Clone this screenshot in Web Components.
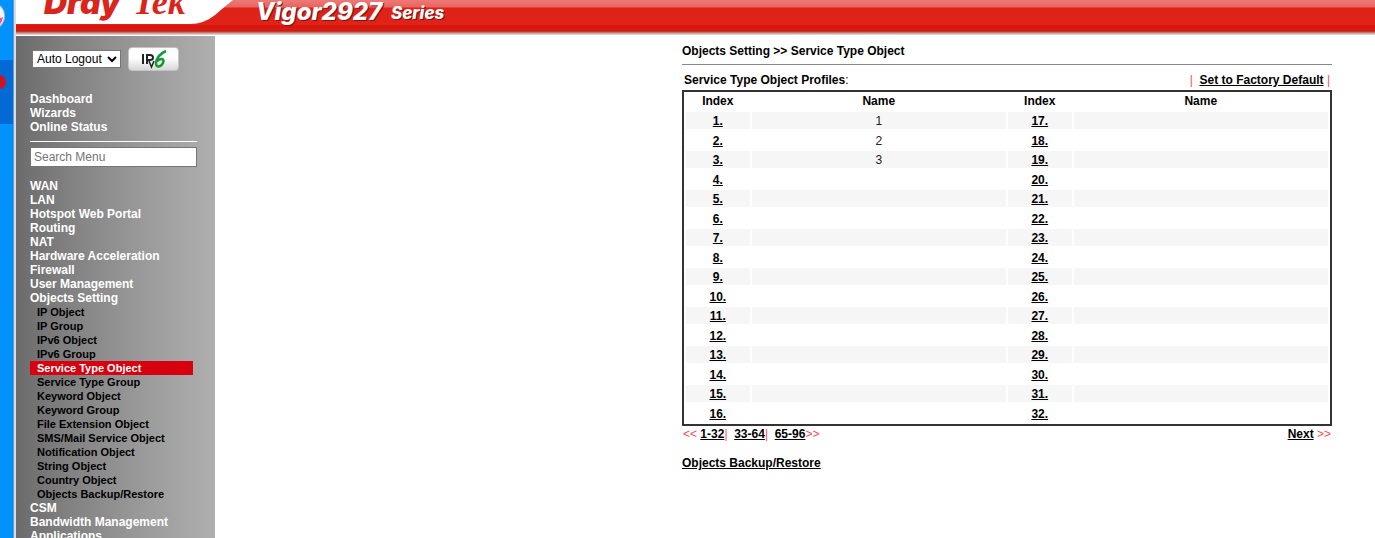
<!DOCTYPE html>
<html lang="en">
<head>
<meta charset="utf-8">
<title>Vigor2927 Series</title>
<style>
    html, body{
        height: 100%;
    }
    body{
        margin: 0;
        overflow: hidden;
        background-color: #fff;
        font-family: "Liberation Sans", Arial, sans-serif;
        font-size: 12px;
        color: #000;
    }
</style>
</head>
<body>
<router-page>
    <desktop-edge slot="edge"></desktop-edge>
    <brand-header slot="header" model="Vigor2927"></brand-header>
    <side-menu slot="menu"></side-menu>
    <profile-page>
        <span slot="path">Objects Setting &gt;&gt; Service Type Object</span>
        <profile-table></profile-table>
    </profile-page>
</router-page>

<script>
const topMenu = ['Dashboard', 'Wizards', 'Online Status']

const mainMenu = [
    { name: 'WAN' },
    { name: 'LAN' },
    { name: 'Hotspot Web Portal' },
    { name: 'Routing' },
    { name: 'NAT' },
    { name: 'Hardware Acceleration' },
    { name: 'Firewall' },
    { name: 'User Management' },
    {
        name: 'Objects Setting',
        items: ['IP Object', 'IP Group', 'IPv6 Object', 'IPv6 Group', 'Service Type Object',
            'Service Type Group', 'Keyword Object', 'Keyword Group', 'File Extension Object',
            'SMS/Mail Service Object', 'Notification Object', 'String Object',
            'Country Object', 'Objects Backup/Restore']
    },
    { name: 'CSM' },
    { name: 'Bandwidth Management' },
    { name: 'Applications' }
]

const profiles = { 1: '1', 2: '2', 3: '3' }

class RouterPage extends HTMLElement {
    constructor() {
        super()
        this._shadowDom = this.attachShadow({ mode: 'open' })
    }

    connectedCallback() {
        this._shadowDom.innerHTML = `
            <style>
                :host{
                    display: flex;
                    height: 100%;
                }
                .window{
                    flex: 1;
                    display: flex;
                    flex-direction: column;
                    border-left: 2px solid #dcdcdc;
                }
                .body{
                    flex: 1;
                    display: flex;
                    min-height: 0;
                    padding-top: 1px;
                }
            </style>
            <slot name="edge"></slot>
            <div class="window">
                <slot name="header"></slot>
                <div class="body">
                    <slot name="menu"></slot>
                    <slot></slot>
                </div>
            </div>
        `
    }
}

// strip of the desktop left of the browser window
class DesktopEdge extends HTMLElement {
    constructor() {
        super()
        this._shadowDom = this.attachShadow({ mode: 'open' })
    }

    connectedCallback() {
        this._shadowDom.innerHTML = `
            <style>
                :host{
                    display: block;
                    flex: none;
                    width: 14px;
                    background: linear-gradient(90deg, #0292fd 12px, #0a7be0 13px, #b9c4cf 14px);
                }
                svg{
                    display: block;
                }
            </style>
            <svg width="14" height="130" viewBox="0 0 14 130" aria-hidden="true">
                <circle cx="-9" cy="16" r="14" fill="#b4bcc6"/>
                <circle cx="-9" cy="16" r="13" fill="#f4f4f6"/>
                <path d="M-4 20L3 17Q2 24-4 28Z" fill="#f0508f"/>
                <rect y="60" width="13" height="64" fill="#0369d4"/>
                <circle cx="-1" cy="82" r="7" fill="#d8101c"/>
                <path d="M-1 79L3 82L-1 85" fill="none" stroke="#8a2a5a"/>
            </svg>
        `
    }
}

class BrandHeader extends HTMLElement {
    constructor() {
        super()
        this._shadowDom = this.attachShadow({ mode: 'open' })
    }

    connectedCallback() {
        this._shadowDom.innerHTML = `
            <style>
                :host{
                    display: block;
                    flex: none;
                    height: 35px;
                    overflow: hidden;
                    background: linear-gradient(#ec7a76 0, #ea6460 7px, #dd2218 8px, #df2318 25px, #d90f04 26px, #db1d12 29px, #c01c12 31px, #d58d88 33px, #bfc4c4 34px, #e4e6e6 35px);
                }
                svg{
                    display: block;
                }
                .dray{
                    font: italic 900 32px Inter, sans-serif;
                }
                .tek{
                    font: italic bold 36px "Liberation Serif", serif;
                }
                .model{
                    font: italic 800 24px Inter, sans-serif;
                }
                .series{
                    font: italic 800 17px Inter, sans-serif;
                }
            </style>
            <svg width="460" height="35" role="img" aria-label="DrayTek ${this.getAttribute('model')} Series">
                <path d="M0 0H217Q207 8 199 15Q188 24 174 24H0Z" fill="#fff"/>
                <g fill="#d9251c">
                    <text class="dray" x="28" y="14">Dray</text>
                    <text class="tek" x="117" y="14">Tek</text>
                </g>
                <g fill="#7d1710">
                    <text class="model" x="241" y="21">${this.getAttribute('model')}</text>
                    <text class="series" x="376" y="20">Series</text>
                </g>
                <g fill="#fff">
                    <text class="model" x="240" y="20">${this.getAttribute('model')}</text>
                    <text class="series" x="375" y="19">Series</text>
                </g>
            </svg>
        `
    }
}

class SideMenu extends HTMLElement {
    constructor() {
        super()
        this._shadowDom = this.attachShadow({ mode: 'open' })
    }

    connectedCallback() {
        this._shadowDom.innerHTML = `
            <style>
                :host{
                    display: block;
                    flex: none;
                    width: 199px;
                    box-sizing: border-box;
                    padding: 11px 18px 0 14px;
                    overflow: hidden;
                    background: linear-gradient(90deg, #6b6b6b, #808080 25%, #999 62%, #afafaf);
                    font-weight: bold;
                    font-size: 12px;
                    line-height: 14px;
                }
                .tools{
                    display: flex;
                    align-items: center;
                    gap: 7px;
                    padding-left: 2px;
                    margin-bottom: 21px;
                }
                select{
                    width: 89px;
                    height: 18px;
                    padding: 0;
                    border: 1px solid #767676;
                    background-color: #fff;
                    font: 12px "Liberation Sans", Arial, sans-serif;
                    color: #000;
                }
                button{
                    width: 51px;
                    height: 24px;
                    padding: 0;
                    border: 1px solid #c4c4c4;
                    border-radius: 4px;
                    background: linear-gradient(#fff 45%, #d8d8d8);
                }
                button svg{
                    display: block;
                    margin: auto;
                }
                a{
                    display: block;
                    color: #fff;
                    text-decoration: none;
                }
                ul{
                    margin: 0;
                    padding: 0;
                    list-style: none;
                }
                ul ul a{
                    margin-right: 4px;
                    padding-left: 7px;
                    font-size: 11px;
                    color: #000;
                }
                ul ul a.active{
                    background-color: #d7000f;
                    color: #fff;
                }
                hr{
                    margin: 7px 0 5px;
                    border: 0;
                    border-top: 1px solid #fff;
                }
                input{
                    display: block;
                    box-sizing: border-box;
                    width: 100%;
                    height: 20px;
                    margin-bottom: 12px;
                    padding: 0 3px;
                    border: 1px solid #767676;
                    font: 12px "Liberation Sans", Arial, sans-serif;
                }
            </style>
            <div class="tools">
                <select aria-label="Auto Logout"><option>Auto Logout</option></select>
                <button type="button" aria-label="IPv6">
                    <svg width="28" height="20" viewBox="0 0 28 20">
                        <path d="M3 5V15M7 15V6H10Q13 6 13 8.500T10 11H7" fill="none" stroke="#222" stroke-width="2"/>
                        <path d="M9 12L11.500 18L14 12" fill="none" stroke="#222" stroke-width="1.500"/>
                        <path d="M26 2Q17 6 16 14Q16 18 19 17.500Q23 16 23.500 12Q23 8 17 12" fill="none" stroke="#129a38" stroke-width="2.500"/>
                    </svg>
                </button>
            </div>
            <ul>${topMenu.map(name => `<li><a href="#">${name}</a></li>`).join('')}</ul>
            <hr>
            <input type="text" placeholder="Search Menu" aria-label="Search Menu">
            <ul>${mainMenu.map(menu => this.renderMenu(menu)).join('')}</ul>
        `
    }

    renderMenu(menu) {
        const items = (menu.items || []).map(item =>
            `<li><a href="#" class="${item === 'Service Type Object' ? 'active' : ''}">${item}</a></li>`
        ).join('')
        return `<li><a href="#">${menu.name}</a>${items ? `<ul>${items}</ul>` : ''}</li>`
    }
}

class ProfilePage extends HTMLElement {
    constructor() {
        super()
        this._shadowDom = this.attachShadow({ mode: 'open' })
    }

    connectedCallback() {
        this._shadowDom.innerHTML = `
            <style>
                :host{
                    display: block;
                    flex: 0 1 650px;
                    margin: 8px 43px 0 auto;
                    line-height: 14px;
                }
                h1{
                    margin: 0 0 6px;
                    font-size: 12px;
                }
                hr{
                    margin: 0 0 8px;
                    border: 0;
                    border-top: 1px solid #888;
                }
                a{
                    color: #000;
                    font-weight: bold;
                }
                .backup{
                    display: inline-block;
                    margin-top: 15px;
                }
            </style>
            <h1><slot name="path"></slot></h1>
            <hr>
            <slot></slot>
            <a class="backup" href="#">Objects Backup/Restore</a>
        `
    }
}

class ProfileTable extends HTMLElement {
    constructor() {
        super()
        this._shadowDom = this.attachShadow({ mode: 'open' })
    }

    connectedCallback() {
        let rows = ''
        for (let i = 1; i <= 16; i++) {
            rows += `<tr>${this.renderCells(i)}${this.renderCells(i + 16)}</tr>`
        }

        this._shadowDom.innerHTML = `
            <style>
                :host{
                    display: block;
                }
                .bar{
                    display: flex;
                    justify-content: space-between;
                    color: #ff4a50;
                    white-space: pre;
                }
                .title{
                    padding-left: 2px;
                    color: #000;
                }
                .caption{
                    margin-bottom: 3px;
                    padding-right: 2px;
                }
                a{
                    color: #000;
                    font-weight: bold;
                }
                table{
                    width: 100%;
                    table-layout: fixed;
                    border: 2px solid #333;
                    border-spacing: 2px;
                }
                th, td{
                    padding: 0;
                    text-align: center;
                }
                th{
                    padding-bottom: 2px;
                    line-height: 14px;
                }
                th:nth-child(odd){
                    width: 10%;
                }
                th:nth-child(even){
                    width: 40%;
                }
                td{
                    padding-top: 2px;
                    line-height: 15px;
                    color: #222;
                }
                tbody tr:nth-child(odd) td{
                    background-color: #f6f6f6;
                }
                tbody tr:nth-child(even) td{
                    line-height: 16px;
                }
                .pages{
                    padding: 1px 1px 0;
                }
            </style>
            <div class="bar caption">
                <span class="title"><b>Service Type Object Profiles</b>:</span>
                <span>|  <a href="#">Set to Factory Default</a> |</span>
            </div>
            <table>
                <thead>
                    <tr><th>Index</th><th>Name</th><th>Index</th><th>Name</th></tr>
                </thead>
                <tbody>${rows}</tbody>
            </table>
            <div class="bar pages">
                <span>&lt;&lt; <a href="#">1-32</a>|  <a href="#">33-64</a>|  <a href="#">65-96</a>&gt;&gt;</span>
                <span><a href="#">Next</a> &gt;&gt;</span>
            </div>
        `
    }

    renderCells(index) {
        return `<td><a href="#">${index}.</a></td><td>${profiles[index] || ''}</td>`
    }
}

window.customElements.define('router-page', RouterPage)
window.customElements.define('desktop-edge', DesktopEdge)
window.customElements.define('brand-header', BrandHeader)
window.customElements.define('side-menu', SideMenu)
window.customElements.define('profile-page', ProfilePage)
window.customElements.define('profile-table', ProfileTable)
</script>
</body>
</html>
